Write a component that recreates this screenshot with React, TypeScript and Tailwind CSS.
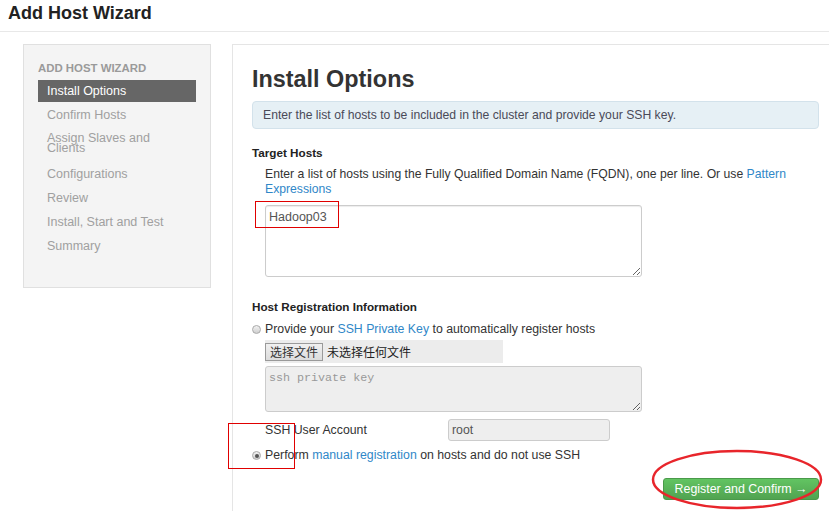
import React from "react";

function Radio({ checked }: { checked?: boolean }) {
  return (
    <span className="relative mr-[4px] inline-block h-[9px] w-[9px] shrink-0 rounded-full border border-[#a9a9a9] bg-gradient-to-b from-[#f2f2f2] to-[#cfcfcf]">
      {checked && (
        <span className="absolute left-[1.5px] top-[1.5px] h-[4px] w-[4px] rounded-full bg-[#555]" />
      )}
    </span>
  );
}

export default function App() {
  return (
    <div className="relative h-[511px] w-[829px] overflow-hidden bg-white font-['Liberation_Sans',Arial,sans-serif] text-[12.3px] text-[#333]">
      {/* header */}
      <div className="h-[32px] border-b border-[#e8e8e8] pl-[8px] pt-[2px]">
        <h1 className="text-[18px] font-bold leading-[22px] text-[#222]">Add Host Wizard</h1>
      </div>

      <div className="mt-[12px] flex pl-[23px]">
        {/* sidebar */}
        <div className="box-border h-[244px] w-[188px] shrink-0 border border-[#e0e0e0] bg-[#f4f4f4] px-[14px] pt-[15px]">
          <div className="mb-[4px] text-[11.4px] font-bold leading-[16px] text-[#9a9a9a]">ADD HOST WIZARD</div>
          <ul className="text-[12.5px] text-[#a0a0a0]">
            <li className="mb-[2px] h-[22px] bg-[#666] pl-[9px] leading-[22px] text-white">Install Options</li>
            <li className="mb-[2px] pl-[9px] leading-[22px]">Confirm Hosts</li>
            <li className="mb-[2px] w-[120px] pb-[8px] pl-[9px] pt-[5px] leading-[10px]">Assign Slaves and Clients</li>
            <li className="mb-[2px] pl-[9px] leading-[22px]">Configurations</li>
            <li className="mb-[2px] pl-[9px] leading-[22px]">Review</li>
            <li className="mb-[2px] pl-[9px] leading-[22px]">Install, Start and Test</li>
            <li className="mb-[2px] pl-[9px] leading-[22px]">Summary</li>
          </ul>
        </div>

        {/* main panel */}
        <div className="ml-[21px] h-[480px] flex-1 border-l border-t border-[#e5e5e5] pl-[19px] pr-[10px] pt-[20px]">
          <h2 className="text-[23.4px] font-bold leading-[28px] text-[#333]">Install Options</h2>
          <div className="mt-[8px] flex h-[28px] items-center rounded-[4px] border border-[#d3e2eb] bg-[#e6f0f5] px-[10px] text-[12.2px] text-[#4a4a58]">
            Enter the list of hosts to be included in the cluster and provide your SSH key.
          </div>

          <div className="mt-[16px] text-[11.7px] font-bold leading-[16px] text-[#222]">Target Hosts</div>
          <div className="pl-[13px]">
            <p className="mt-[6px] text-[12.2px] leading-[15px] text-[#333]">
              Enter a list of hosts using the Fully Qualified Domain Name (FQDN), one per line. Or use{" "}
              <span className="text-[#2f87c8]">Pattern Expressions</span>
            </p>
            <textarea
              defaultValue="Hadoop03"
              className="mt-[8px] box-border block h-[72px] w-[377px] rounded-[3px] border border-[#ccc] px-[3px] py-[2px] font-['Liberation_Sans',Arial,sans-serif] text-[12.5px] leading-[18px] text-[#555] shadow-[inset_0_1px_1px_rgba(0,0,0,0.075)] outline-none"
            />
          </div>

          <div className="mt-[22px] text-[11.7px] font-bold leading-[16px] text-[#222]">Host Registration Information</div>
          <div className="mt-[7px] flex items-center leading-[15px]">
            <Radio />
            <span>
              Provide your <span className="text-[#2f87c8]">SSH Private Key</span> to automatically register hosts
            </span>
          </div>
          <div className="pl-[13px]">
            <div className="mt-[3px] flex h-[23px] w-[238px] items-center bg-[#ececec]">
              <span className="box-border flex h-[18px] w-[58px] items-center justify-center border border-[#9a9a9a] bg-gradient-to-b from-[#f0f0f0] to-[#dcdcdc] font-['Noto_Sans_CJK_SC',sans-serif] text-[12px] leading-none text-[#333]">
                选择文件
              </span>
              <span className="ml-[4px] font-['Noto_Sans_CJK_SC',sans-serif] text-[12px] leading-none text-[#222]">未选择任何文件</span>
            </div>
            <textarea
              placeholder="ssh private key"
              className="mt-[3px] box-border block h-[46px] w-[377px] rounded-[3px] border border-[#ccc] bg-[#eee] px-[3px] py-[3px] font-['Liberation_Mono',monospace] text-[11.7px] leading-[16px] text-[#555] outline-none placeholder:text-[#999]"
            />
            <div className="mt-[7px] flex h-[22px] items-center">
              <span className="w-[183px]">SSH User Account</span>
              <div className="box-border flex h-[22px] w-[162px] items-center rounded-[3px] border border-[#ccc] bg-[#eee] px-[3px] text-[#555]">
                root
              </div>
            </div>
          </div>
          <div className="mt-[7px] flex items-center leading-[15px]">
            <Radio checked />
            <span>
              Perform <span className="text-[#2f87c8]">manual registration</span> on hosts and do not use SSH
            </span>
          </div>
          <div className="mt-[15px] flex justify-end">
            <button className="box-border h-[22px] w-[156px] rounded-[3px] border border-[#4a9a4a] bg-gradient-to-b from-[#62c462] to-[#51a351] text-[12.4px] leading-[20px] text-white">
              Register and Confirm →
            </button>
          </div>
        </div>
      </div>

      {/* annotations */}
      <div className="pointer-events-none absolute left-[255px] top-[201px] h-[27px] w-[84px] border border-[#e00000]" />
      <div className="pointer-events-none absolute left-[228px] top-[423px] h-[46px] w-[67px] border border-[#e00000]" />
      <svg className="pointer-events-none absolute left-0 top-0" width="829" height="511">
        <ellipse cx="737" cy="479.5" rx="84" ry="28.5" fill="none" stroke="#e8252b" strokeWidth="2.5" />
      </svg>
    </div>
  );
}
